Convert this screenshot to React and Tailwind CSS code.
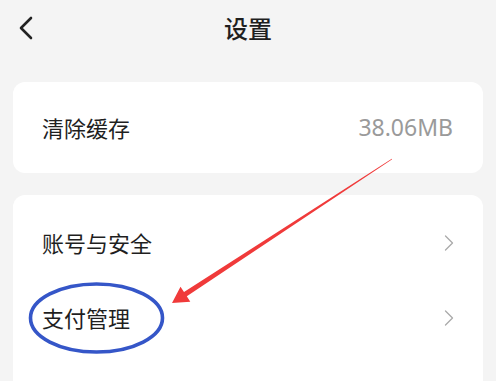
import { ChevronRight } from "lucide-react";

const rows = ["账号与安全", "支付管理", "通用设置"];

export default function App() {
  return (
    <div
      className="relative h-[381px] overflow-hidden bg-[#f4f4f4] text-[#1f1f1f]"
      style={{ fontFamily: '"Noto Sans CJK SC", "Noto Sans", sans-serif' }}
    >
      {/* header */}
      <div className="flex h-[56px] items-center px-[18px]">
        <svg width="18" height="26" viewBox="0 0 18 26" fill="none" className="shrink-0">
          <path d="M13 3L3 13L13 23" stroke="#222" strokeWidth="2.6" strokeLinecap="round" strokeLinejoin="round" />
        </svg>
        <div className="flex-1 text-center text-[24px] font-medium leading-none">设置</div>
        <div className="w-[18px] shrink-0" />
      </div>

      {/* cache card */}
      <div className="mx-[13px] mt-[26px] flex h-[91px] items-center justify-between rounded-xl bg-white pl-[29px] pr-[30px]">
        <span className="text-[22px]">清除缓存</span>
        <span className="text-[23px] text-[#9a9a9a]" style={{ fontFamily: '"Noto Sans", sans-serif' }}>38.06MB</span>
      </div>

      {/* list card */}
      <div className="mx-[13px] mt-[22px] rounded-xl bg-white pt-[10px]">
        {rows.map((r) => (
          <div key={r} className="flex h-[75px] items-center justify-between pl-[29px] pr-[20px]">
            <span className="text-[22px]">{r}</span>
            <ChevronRight size={28} strokeWidth={1.1} className="text-[#aaaaaa]" />
          </div>
        ))}
      </div>

      {/* annotation overlay */}
      <svg className="pointer-events-none absolute inset-0 h-full w-full" viewBox="0 0 496 381">
        <ellipse cx="96.5" cy="318" rx="66" ry="34" fill="none" stroke="#3556c8" strokeWidth="3.6" />
        <polygon
          points="391.8,158.7 184,292.1 180.5,286.7 172,303 190.3,301.7 186.8,296.3 392.2,159.3"
          fill="#f03a3a"
        />
      </svg>
    </div>
  );
}
